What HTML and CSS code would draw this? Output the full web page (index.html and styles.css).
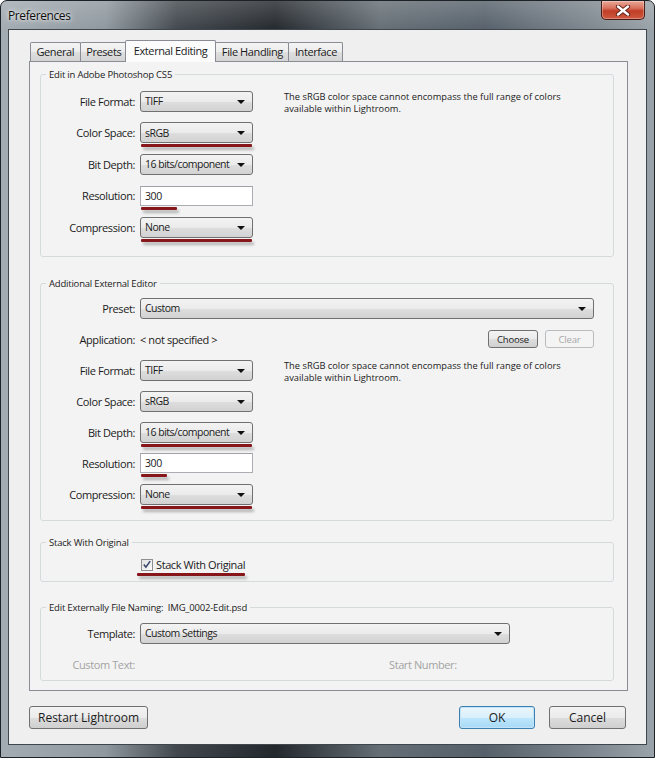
FILE: index.html
```html
<!DOCTYPE html>
<html lang="en">

<head>
	<meta charset="UTF-8">
	<meta name="viewport" content="width=device-width, initial-scale=1.0">
	<title>Preferences</title>
	<link rel="stylesheet" href="styles.css">
</head>

<body>
	<div class="window">
		<div class="window__title">
			<span class="window__caption">Preferences</span>
			<span class="window__close">
				<svg width="16" height="11" viewBox="0 0 16 11">
					<path d="M3 1.5 L13 9.5 M13 1.5 L3 9.5" stroke="#5b1d17" stroke-width="4.2" stroke-linecap="round" />
					<path d="M3 1.5 L13 9.5 M13 1.5 L3 9.5" stroke="#fff" stroke-width="2.4" stroke-linecap="round" />
				</svg>
			</span>
		</div>
		<div class="window__client">
			<div class="tabs">
				<span class="tabs__item">General</span>
				<span class="tabs__item">Presets</span>
				<span class="tabs__item tabs__item--active">External Editing</span>
				<span class="tabs__item">File Handling</span>
				<span class="tabs__item">Interface</span>
			</div>
			<div class="panel">
				<fieldset class="group group--photoshop">
					<legend>Edit in Adobe Photoshop CS5</legend>
					<div class="form">
						<span class="form__label">File Format:</span>
						<div class="combo">TIFF</div>
						<p class="form__note">The sRGB color space cannot encompass the full range of colors<br>available within Lightroom.</p>
						<span class="form__label">Color Space:</span>
						<div class="combo mark">sRGB</div>
						<span class="form__label">Bit Depth:</span>
						<div class="combo">16 bits/component</div>
						<span class="form__label">Resolution:</span>
						<div class="field mark mark--res">300</div>
						<span class="form__label">Compression:</span>
						<div class="combo mark">None</div>
					</div>
				</fieldset>

				<fieldset class="group group--additional">
					<legend>Additional External Editor</legend>
					<div class="form form--tight">
						<span class="form__label">Preset:</span>
						<div class="combo combo--wide">Custom</div>
						<span class="form__label">Application:</span>
						<span class="form__value">&lt; not specified &gt;</span>
						<div class="form__actions">
							<span class="btn-small">Choose</span>
							<span class="btn-small btn-small--off">Clear</span>
						</div>
						<span class="form__label">File Format:</span>
						<div class="combo">TIFF</div>
						<p class="form__note">The sRGB color space cannot encompass the full range of colors<br>available within Lightroom.</p>
						<span class="form__label">Color Space:</span>
						<div class="combo">sRGB</div>
						<span class="form__label">Bit Depth:</span>
						<div class="combo mark">16 bits/component</div>
						<span class="form__label">Resolution:</span>
						<div class="field mark mark--res2">300</div>
						<span class="form__label">Compression:</span>
						<div class="combo mark">None</div>
					</div>
				</fieldset>

				<fieldset class="group group--stack">
					<legend>Stack With Original</legend>
					<div class="check">
						<span class="check__box">
							<svg width="11" height="11" viewBox="0 0 11 11">
								<path d="M2 5.5 L4.3 8.5 L9 1.8" fill="none" stroke="#3b4a6b" stroke-width="1.8" />
							</svg>
						</span>
						<span class="check__text mark mark--check">Stack With Original</span>
					</div>
				</fieldset>

				<fieldset class="group group--naming">
					<legend>Edit Externally File Naming:&nbsp; IMG_0002-Edit.psd</legend>
					<div class="form form--naming">
						<span class="form__label">Template:</span>
						<div class="combo combo--template">Custom Settings</div>
						<span class="form__label form__label--off">Custom Text:</span>
						<span></span>
						<span class="form__off">Start Number:</span>
					</div>
				</fieldset>
			</div>
			<div class="footer">
				<span class="btn btn--restart">Restart Lightroom</span>
				<span class="btn btn--ok">OK</span>
				<span class="btn btn--cancel">Cancel</span>
			</div>
		</div>
	</div>
</body>

</html>
```

FILE: styles.css
```css
* {
	box-sizing: border-box;
}

body {
	margin: 0;
	width: 655px;
	height: 758px;
	overflow: hidden;
	background: #fff;
	font-family: "Open Sans", "Liberation Sans", sans-serif;
	font-size: 11px;
	letter-spacing: -0.4px;
	color: #1b1b1b;
}

.window {
	height: 758px;
	display: flex;
	flex-direction: column;
	padding: 0 7px 12px;
	border: 1px solid #1d2226;
	border-radius: 7px 7px 0 0;
	background:
		linear-gradient(180deg, rgba(255, 255, 255, .18), rgba(0, 0, 0, 0) 30px),
		linear-gradient(90deg, #a3acb2 0%, #8f989f 16%, #41474d 27%, #23282d 42%, #656e75 58%, #56606a 74%, #7d868e 90%, #9aa3a9 100%);
}

.window__title {
	height: 28px;
	display: flex;
	align-items: flex-start;
}

.window__caption {
	margin-top: 6px;
	font-size: 12px;
	color: #0d0d0d;
	text-shadow: 0 0 6px rgba(255, 255, 255, .9), 0 0 3px rgba(255, 255, 255, .8);
}

.window__close {
	margin-left: auto;
	margin-right: 2px;
	width: 44px;
	height: 19px;
	display: flex;
	align-items: center;
	justify-content: center;
	border: 1px solid #4a1a14;
	border-top: none;
	border-radius: 0 0 5px 5px;
	background: linear-gradient(180deg, #e9a898 0%, #d7705c 40%, #c13d26 55%, #cc5a40 100%);
	box-shadow: inset 0 0 0 1px rgba(255, 255, 255, .3);
}

.window__client {
	flex: 1;
	display: flex;
	flex-direction: column;
	padding: 10px 18px 15px 20px;
	border: 1px solid #3f474e;
	background: #efefef;
}

/* tabs */
.tabs {
	height: 21px;
	display: flex;
	align-items: flex-end;
	padding-left: 1px;
	position: relative;
	z-index: 1;
}

.tabs__item {
	height: 19px;
	padding: 0 5.5px;
	margin-right: -1px;
	border: 1px solid #898c95;
	border-bottom: none;
	border-radius: 2px 2px 0 0;
	line-height: 17px;
	background: linear-gradient(180deg, #f4f4f4 0%, #ececec 50%, #dfdfdf 51%, #d4d4d4 100%);
}

.tabs__item--active {
	height: 22px;
	margin: 0 -1px -1px -2px;
	padding: 0 8px;
	line-height: 19px;
	background: #fbfbfb;
	position: relative;
}

.panel {
	display: flex;
	flex-direction: column;
	padding: 7px 13px 9px 10px;
	border: 1px solid #898c95;
	background: #f3f3f3;
}

/* group boxes */
.group {
	margin: 0;
	min-width: 0;
	padding: 10px 0 18px;
	border: 1px solid #d5dadd;
	border-radius: 3px;
}

.group legend {
	margin-left: 5px;
	padding: 0 3px;
	font-size: 9.5px;
	letter-spacing: -0.2px;
	line-height: 12px;
}

.group--additional {
	margin-top: 21px;
	padding: 8px 0 15px;
}

.group--stack {
	margin-top: 16px;
	padding: 8px 0;
}

.group--naming {
	margin-top: 20px;
	padding: 9px 0 5px;
}

.form {
	display: grid;
	grid-template-columns: 94px 113px 1fr;
	grid-auto-rows: 21px;
	column-gap: 5px;
	row-gap: 10.5px;
	align-items: center;
}

.form--tight {
	row-gap: 10px;
}

.form__label {
	grid-column: 1;
	text-align: right;
	white-space: nowrap;
}

.form__label--off,
.form__off {
	color: #a3a3a3;
}

.form__off {
	margin-left: 131px;
}

.form__value {
	white-space: nowrap;
}

.form__note {
	grid-column: 3;
	grid-row: span 2;
	align-self: start;
	margin: 0 0 0 26px;
	font-size: 9.3px;
	letter-spacing: 0;
	line-height: 12px;
}

.form__actions {
	display: flex;
	justify-content: flex-end;
	gap: 7px;
	margin-right: 19px;
}

/* controls */
.combo {
	height: 21px;
	display: flex;
	align-items: center;
	padding-left: 4px;
	font-size: 10.5px;
	letter-spacing: -0.5px;
	border: 1px solid #707070;
	border-radius: 3px;
	background: linear-gradient(180deg, #f3f3f3 0%, #ebebeb 50%, #dedede 51%, #d2d2d2 100%);
	position: relative;
	white-space: nowrap;
}

.combo::after {
	content: "";
	position: absolute;
	right: 7px;
	top: 8px;
	border-left: 4px solid transparent;
	border-right: 4px solid transparent;
	border-top: 4px solid #111;
}

.combo--wide {
	grid-column: 2 / 4;
	margin-right: 19px;
}

.combo--template {
	grid-column: 2 / 4;
	margin-right: 103px;
}

.field {
	height: 20px;
	display: flex;
	align-items: center;
	padding-left: 4px;
	font-size: 10.5px;
	border: 1px solid #abadb3;
	border-top-color: #9ea1a8;
	background: #fff;
}

.btn-small {
	width: 50px;
	height: 18px;
	display: flex;
	align-items: center;
	justify-content: center;
	font-size: 9.5px;
	letter-spacing: -0.2px;
	border: 1px solid #707070;
	border-radius: 3px;
	background: linear-gradient(180deg, #f3f3f3 0%, #ebebeb 50%, #dedede 51%, #d0d0d0 100%);
}

.btn-small--off {
	width: 49px;
	color: #a8a8a8;
	border-color: #b9bdc0;
	background: #f4f4f4;
}

.check {
	height: 16px;
	display: flex;
	align-items: center;
	padding-left: 100px;
}

.check__box {
	width: 12px;
	height: 12px;
	display: flex;
	align-items: center;
	justify-content: center;
	border: 1px solid #8e8f8f;
	background: linear-gradient(135deg, #e2e2e2, #fbfbfb);
}

.check__text {
	margin-left: 3px;
}

/* red annotation strokes drawn over the screenshot */
.mark {
	position: relative;
}

.mark::before {
	content: "";
	position: absolute;
	left: 0;
	right: 0;
	top: calc(100% + 2px);
	height: 3px;
	border-radius: 1px;
	background: #861619;
	box-shadow: 2px 3px 3px rgba(0, 0, 0, .28);
}

.mark--res::before {
	right: auto;
	width: 36px;
}

.mark--res2::before {
	right: auto;
	width: 26px;
}

.mark--check::before {
	left: -19px;
	right: 0;
	top: calc(100% + 1px);
}

/* footer buttons */
.footer {
	display: flex;
	margin-top: 15px;
	margin-right: 2px;
}

.btn {
	height: 23px;
	display: flex;
	align-items: center;
	justify-content: center;
	font-size: 12px;
	letter-spacing: 0;
	border: 1px solid #707070;
	border-radius: 3px;
	background: linear-gradient(180deg, #f3f3f3 0%, #ebebeb 50%, #dddddd 51%, #cfcfcf 100%);
}

.btn--restart {
	width: 119px;
}

.btn--ok {
	width: 76px;
	margin-left: auto;
	border-color: #3c7fb1;
	box-shadow: inset 0 0 0 1px #c4e3f7;
	background: linear-gradient(180deg, #eaf6fd 0%, #d9f0fc 50%, #bee6fd 51%, #a7d9f5 100%);
}

.btn--cancel {
	width: 77px;
	margin-left: 14px;
}
```
